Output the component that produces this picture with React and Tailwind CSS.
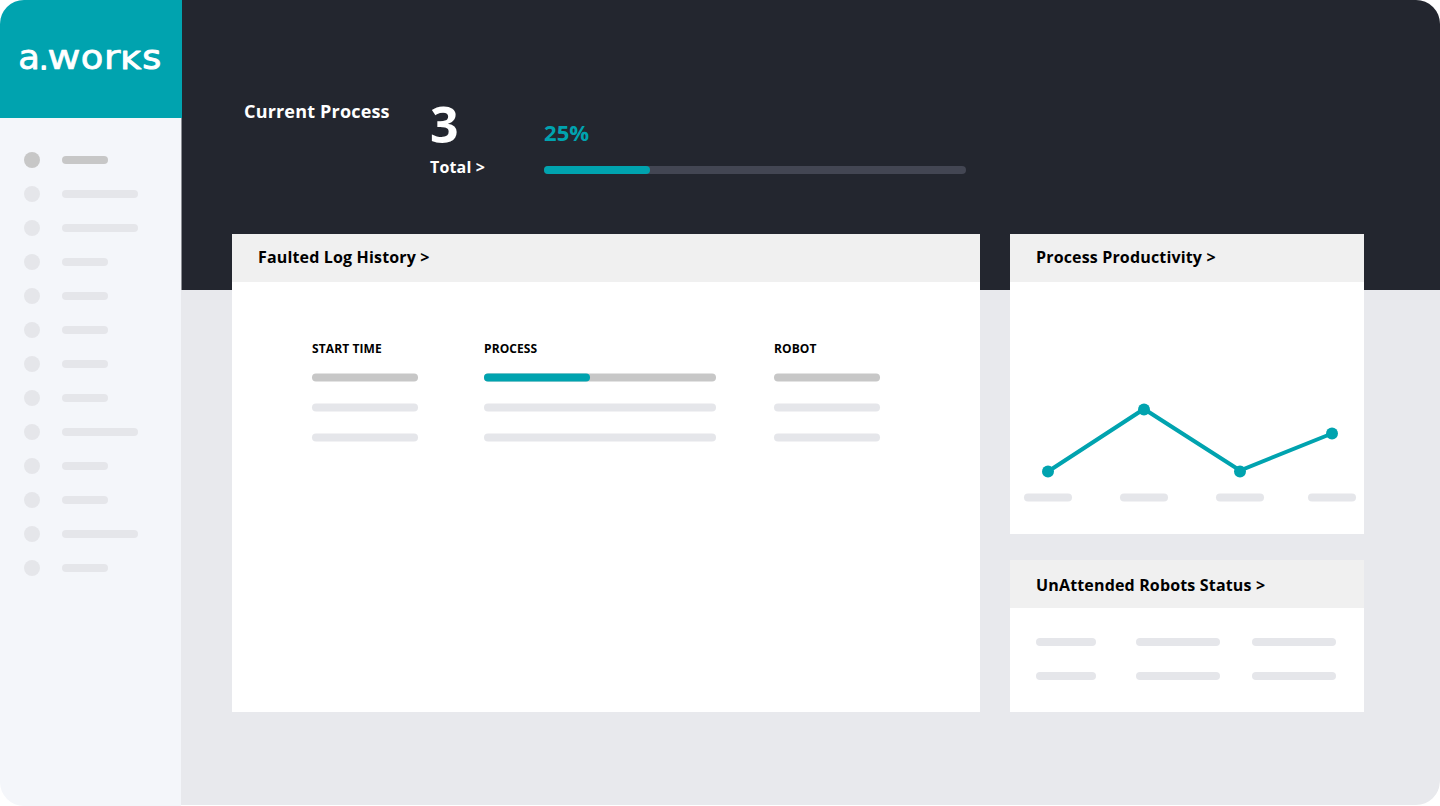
import clsx from "clsx";

const NAV_ITEMS = [
  "short", "long", "long", "short", "short", "short", "short",
  "short", "long", "short", "short", "long", "short",
];

const POINTS = [
  { x: 38, y: 190 },
  { x: 134, y: 128 },
  { x: 230, y: 190 },
  { x: 322, y: 152 },
];

// Each letter of the wordmark has its own advance width.
const WORDMARK = [
  { char: "a", x: 18.2, width: 21.6, size: 34, stroke: 0.8 },
  { char: ".", x: 40.2, width: 7, size: 22, stroke: 2 },
  { char: "w", x: 47.3, width: 33.4, size: 34, stroke: 0.6 },
  { char: "o", x: 80.8, width: 22.6, size: 34, stroke: 0.8 },
  { char: "r", x: 103.4, width: 17, size: 34, stroke: 0.5 },
  { char: "k", x: 120.8, width: 19.6, size: 25.6, stroke: 1.2 },
  { char: "s", x: 142.2, width: 19, size: 34, stroke: 1 },
];

function Bar({ className }) {
  return <div className={clsx("h-2 shrink-0 rounded-full", className)} />;
}

function Logo() {
  return (
    <svg width="182" height="118" viewBox="0 0 182 118" aria-label="a.works">
      <g
        fill="#fff"
        stroke="#fff"
        strokeLinejoin="round"
        fontFamily="'DejaVu Sans', sans-serif"
      >
        {WORDMARK.map((l) => (
          <text
            key={l.char}
            x={l.x}
            y={l.char === "." ? 69 : 69.3}
            fontSize={l.size}
            strokeWidth={l.stroke}
            textLength={l.width}
            lengthAdjust="spacingAndGlyphs"
            className={l.char === "k" ? "uppercase" : undefined}
          >
            {l.char}
          </text>
        ))}
      </g>
    </svg>
  );
}

function Sidebar() {
  return (
    <aside className="w-[181px] shrink-0 bg-[#f4f6fa]">
      <div className="relative h-[118px] w-[182px] bg-[#00a3af]">
        <Logo />
      </div>
      <nav className="flex flex-col gap-[18px] pt-[34px] pl-6">
        {NAV_ITEMS.map((size, i) => {
          const color = i === 0 ? "bg-[#c7c7c7]" : "bg-[#e5e6ea]";
          return (
            <div key={i} className="flex items-center gap-[22px]">
              <span className={clsx("size-4 rounded-full", color)} />
              <Bar className={clsx(size === "long" ? "w-[76px]" : "w-[46.4px]", color)} />
            </div>
          );
        })}
      </nav>
    </aside>
  );
}

function Card({ title, titleClass, className, children }) {
  return (
    <section className={clsx("bg-white", className)}>
      <h2
        className={clsx(
          "flex h-12 items-center bg-[#f0f0f0] pl-[26px] text-base font-bold tracking-[0.16px] text-black",
          titleClass
        )}
      >
        {title}
      </h2>
      {children}
    </section>
  );
}

function LogColumn({ label, width, progress }) {
  return (
    <div className="flex flex-col">
      <h3 className="h-4 text-xs leading-4 font-bold tracking-[0.1px] text-black">{label}</h3>
      <div className={clsx("mt-[17px] flex translate-y-[-0.4px] flex-col gap-[22px]", width)}>
        <div className="h-2 rounded-full bg-[#c7c7c7]">
          {progress && <Bar className="w-[106px] bg-[#00a3af]" />}
        </div>
        <Bar className="bg-[#e5e6ea]" />
        <Bar className="bg-[#e5e6ea]" />
      </div>
    </div>
  );
}

function ProductivityChart() {
  return (
    <svg width="354" height="252" viewBox="0 0 354 252" className="block">
      <polyline
        points="38,189.5 134,127 230,188.5 322,151.5"
        fill="none"
        stroke="#00a3af"
        strokeWidth="4"
      />
      {POINTS.map((p) => (
        <circle key={p.x} cx={p.x} cy={p.y - 0.4} r="6" fill="#00a3af" />
      ))}
      {[14, 110, 206, 298].map((x) => (
        <rect key={x} x={x} y="211.5" width="48" height="8" rx="4" fill="#e5e6ea" />
      ))}
    </svg>
  );
}

export default function App() {
  return (
    <div className="h-[806px] w-[1440px] bg-white font-['Open_Sans',sans-serif]">
      <div className="flex h-[806px] overflow-hidden rounded-3xl">
        <Sidebar />
        <main className="flex h-[805px] flex-1 flex-col overflow-hidden rounded-br-3xl bg-[#e8e9ed]">
          <header className="flex h-[290px] shrink-0 border-l border-[#8b8d93] bg-[#23262f] pl-[62px] text-white">
            <h1 className="w-[186px] pt-[99px] text-lg leading-[25px] font-bold tracking-[0.18px]">
              Current Process
            </h1>
            <div className="w-[114px] pt-[96px]">
              <div className="text-[50px] leading-[56px] font-bold">3</div>
              <div className="mt-1 text-base leading-[22px] font-bold tracking-[0.16px]">Total &gt;</div>
            </div>
            <div className="w-[422px] pt-[118px]">
              <div className="text-[22px] leading-7 font-bold tracking-[0.1px] text-[#00a3af]">25%</div>
              <div className="mt-5 h-2 rounded-full bg-[#434653]">
                <Bar className="w-[106px] bg-[#00a3af]" />
              </div>
            </div>
          </header>
          <div className="-mt-14 ml-[51px] flex gap-[30px]">
            <Card title="Faulted Log History >" titleClass="pb-0.5" className="h-[478px] w-[748px]">
              <div className="flex pt-[59px] pl-20">
                <div className="w-[172px]">
                  <LogColumn label="START TIME" width="w-[106px]" />
                </div>
                <div className="w-[290px]">
                  <LogColumn label="PROCESS" width="w-[232px]" progress />
                </div>
                <LogColumn label="ROBOT" width="w-[106px]" />
              </div>
            </Card>
            <div className="flex w-[354px] flex-col gap-[26px]">
              <Card title="Process Productivity >" titleClass="pb-0.5" className="h-[300px]">
                <ProductivityChart />
              </Card>
              <Card title="UnAttended Robots Status >" titleClass="pt-0.5" className="h-[152px]">
                <div className="flex flex-col gap-[26px] pt-[30px] pl-[26px]">
                  {[0, 1].map((row) => (
                    <div key={row} className="flex">
                      <Bar className="mr-10 w-[60px] bg-[#e5e6ea]" />
                      <Bar className="mr-8 w-[84px] bg-[#e5e6ea]" />
                      <Bar className="w-[84px] bg-[#e5e6ea]" />
                    </div>
                  ))}
                </div>
              </Card>
            </div>
          </div>
        </main>
      </div>
    </div>
  );
}
